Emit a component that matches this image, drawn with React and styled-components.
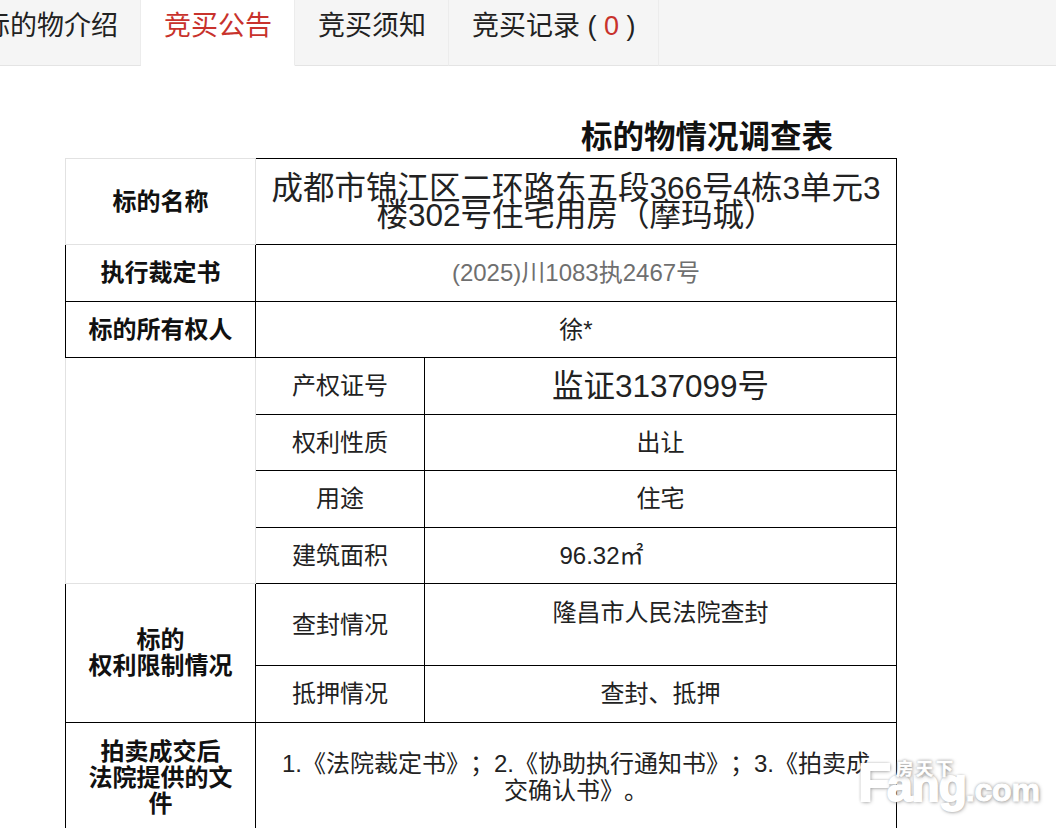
import React from 'react'
import styled, { createGlobalStyle } from 'styled-components'

const fontStack = '"Liberation Sans", "Noto Sans CJK SC", sans-serif'

const GlobalStyle = createGlobalStyle`
    html, body {
        margin: 0;
        padding: 0;
        background: #fff;
        overflow: hidden;
    }
    body {
        font-family: ${fontStack};
        text-spacing-trim: space-all;
    }
`

const Page = styled.div`
    position: relative;
    width: 1056px;
    height: 828px;
    overflow: hidden;
    background: #fff;
`

const TabBar = styled.div`
    display: flex;
    box-sizing: border-box;
    height: 66px;
    margin-left: -40px;
    background: #f5f5f5;
    border-bottom: 1px solid #e4e4e4;
`

const Tab = styled.div`
    box-sizing: border-box;
    height: 66px;
    padding: 0 22px 0 23px;
    border-right: 1px solid #ececec;
    border-bottom: 1px solid ${p => (p.$active ? '#fff' : '#e4e4e4')};
    background: ${p => (p.$active ? '#fff' : 'transparent')};
    color: ${p => (p.$active ? '#c8322c' : '#222')};
    font-size: 27px;
    line-height: 53px;
    white-space: nowrap;
`

const Count = styled.span`
    color: #c8322c;
`

const Title = styled.h1`
    margin: 0;
    padding: 50px 0 0 358px;
    height: 42px;
    font-size: 31.5px;
    line-height: 42px;
    font-weight: 700;
    text-align: center;
    color: #111;
`

const Sheet = styled.table`
    margin-left: 65px;
    width: 831px;
    table-layout: fixed;
    border-collapse: collapse;
    color: #222;
    font-size: 24px;
`

const Row = styled.tr`
    height: ${p => p.$h}px;
`

const Cell = styled.td`
    box-sizing: border-box;
    padding: ${p => p.$pad || '0'};
    border: 1px solid ${p => (p.$faint ? '#e2e2e2' : '#000')};
    text-align: center;
    vertical-align: ${p => p.$valign || 'middle'};
    line-height: ${p => p.$lh || 26}px;
    font-size: ${p => p.$size || 24}px;
    font-weight: ${p => (p.$label ? 700 : 400)};
    color: ${p => p.$color || (p.$label ? '#111' : '#222')};
`

const Watermark = styled.div`
    position: absolute;
    left: 858px;
    top: 753px;
    width: 190px;
    height: 60px;
    color: #fff;
    text-shadow: 0 0 3px #8a8a8a, 1px 1px 4px #9a9a9a;
    pointer-events: none;
`

const WatermarkCn = styled.span`
    position: absolute;
    left: 38px;
    top: 8px;
    font-size: 17px;
    font-weight: 700;
    letter-spacing: 3px;
    line-height: 18px;
    -webkit-text-stroke: 0.5px #fff;
`

const WatermarkEn = styled.span`
    position: absolute;
    left: 0;
    top: 2px;
    font-size: 46px;
    line-height: 54px;
    font-weight: 700;
    letter-spacing: -1px;
    white-space: nowrap;
    -webkit-text-stroke: 2px #fff;
`

const WatermarkCap = styled.span`
    font-size: 54px;
    letter-spacing: -4px;
`

const WatermarkCom = styled.span`
    font-size: 32px;
    letter-spacing: -0.2px;
    -webkit-text-stroke: 1px #fff;
`

const App = () => {
    return (
        <Page>
            <GlobalStyle />
            <TabBar>
                <Tab>标的物介绍</Tab>
                <Tab $active>竞买公告</Tab>
                <Tab>竞买须知</Tab>
                <Tab>竞买记录 ( <Count>0</Count> )</Tab>
            </TabBar>
            <Title>标的物情况调查表</Title>
            <Sheet>
                <colgroup>
                    <col style={{ width: 190 }} />
                    <col style={{ width: 169 }} />
                    <col style={{ width: 472 }} />
                </colgroup>
                <tbody>
                    <Row $h={86}>
                        <Cell $label $faint>标的名称</Cell>
                        <Cell colSpan={2} $size={31.5} $lh={27} $pad="0 8px">成都市锦江区二环路东五段366号4栋3单元3楼302号住宅用房（摩玛城）</Cell>
                    </Row>
                    <Row $h={57}>
                        <Cell $label>执行裁定书</Cell>
                        <Cell colSpan={2} $color="#6f6f6f">(2025)川1083执2467号</Cell>
                    </Row>
                    <Row $h={56}>
                        <Cell $label>标的所有权人</Cell>
                        <Cell colSpan={2}>徐*</Cell>
                    </Row>
                    <Row $h={57}>
                        <Cell rowSpan={4} $faint />
                        <Cell>产权证号</Cell>
                        <Cell $size={31.5}>监证3137099号</Cell>
                    </Row>
                    <Row $h={56}>
                        <Cell>权利性质</Cell>
                        <Cell>出让</Cell>
                    </Row>
                    <Row $h={57}>
                        <Cell>用途</Cell>
                        <Cell>住宅</Cell>
                    </Row>
                    <Row $h={56}>
                        <Cell>建筑面积</Cell>
                        <Cell $pad="0 118px 0 0">96.32㎡</Cell>
                    </Row>
                    <Row $h={82}>
                        <Cell rowSpan={2} $label>标的<br />权利限制情况</Cell>
                        <Cell>查封情况</Cell>
                        <Cell $valign="top" $pad="16px 0 0 0">隆昌市人民法院查封</Cell>
                    </Row>
                    <Row $h={57}>
                        <Cell>抵押情况</Cell>
                        <Cell>查封、抵押</Cell>
                    </Row>
                    <Row $h={110}>
                        <Cell $label $pad="0 12px">拍卖成交后<br />法院提供的文件</Cell>
                        <Cell colSpan={2} $valign="top" $pad="27px 24px 0" $lh={27}>1.《法院裁定书》；2.《协助执行通知书》；3.《拍卖成交确认书》。</Cell>
                    </Row>
                </tbody>
            </Sheet>
            <Watermark>
                <WatermarkEn><WatermarkCap>F</WatermarkCap>ang<WatermarkCom>.com</WatermarkCom></WatermarkEn>
                <WatermarkCn>房天下</WatermarkCn>
            </Watermark>
        </Page>
    )
}

export default App
